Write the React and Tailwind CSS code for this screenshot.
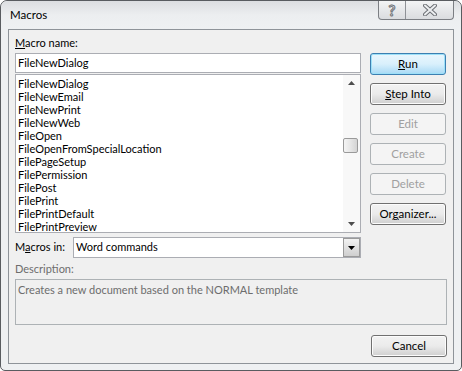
import React from 'react';

const macros = [
  'FileNewDialog',
  'FileNewEmail',
  'FileNewPrint',
  'FileNewWeb',
  'FileOpen',
  'FileOpenFromSpecialLocation',
  'FilePageSetup',
  'FilePermission',
  'FilePost',
  'FilePrint',
  'FilePrintDefault',
  'FilePrintPreview',
];

function Btn({ children, variant = 'normal' }) {
  if (variant === 'default') {
    return (
      <button className="h-[22px] w-[76px] rounded-[3px] border border-[#3c7fb1] bg-gradient-to-b from-[#eaf6fd] via-[#d9f0fc] to-[#a7d9f5] text-[11.5px] text-black shadow-[inset_0_0_0_1px_#9de0f8]">
        {children}
      </button>
    );
  }
  if (variant === 'disabled') {
    return (
      <button className="h-[22px] w-[76px] rounded-[3px] border border-[#adb2b5] bg-[#f4f4f4] text-[11.5px] text-[#a0a0a0]">
        {children}
      </button>
    );
  }
  return (
    <button className="h-[22px] w-[76px] rounded-[3px] border border-[#707070] bg-gradient-to-b from-[#f2f2f2] via-[#ebebeb] to-[#cfcfcf] text-[11.5px] text-black shadow-[inset_0_0_0_1px_#fcfcfc]">
      {children}
    </button>
  );
}

export default function App() {
  return (
    <div className="w-[462px] h-[371px] bg-white font-['Lato',sans-serif] text-[11px] text-black">
      <div className="relative flex h-[371px] flex-col rounded-t-[7px] rounded-b-[5px] border border-[#595c60] bg-[#eef0f2] px-[7px] pb-[6px]">
        {/* title bar */}
        <div className="flex h-[28px] items-center bg-gradient-to-b from-[#dcdee1] via-[#eceef0] to-[#eef0f2] -mx-[7px] px-[9px] rounded-t-[7px]">
          <span className="text-[11.5px] text-black">Macros</span>
        </div>
        <div className="absolute right-[7px] top-0 flex h-[19px] overflow-hidden rounded-b-[4px] border border-t-0 border-[#7b7e83] bg-gradient-to-b from-[#f3f4f5] to-[#dadcdf]">
          <div className="flex w-[27px] items-center justify-center border-r border-[#8e9196] text-[15px] font-bold text-[#e9eaec] [-webkit-text-stroke:1px_#6d7075] leading-none">?</div>
          <div className="flex w-[47px] items-center justify-center">
            <svg width="14" height="12" viewBox="0 0 14 12">
              <path d="M2 1.5 L12 10.5 M12 1.5 L2 10.5" stroke="#6d7075" strokeWidth="4" strokeLinecap="round" />
              <path d="M2 1.5 L12 10.5 M12 1.5 L2 10.5" stroke="#eceef0" strokeWidth="2" strokeLinecap="round" />
            </svg>
          </div>
        </div>

        {/* client area */}
        <div className="flex flex-1 flex-col border border-[#8e9399] bg-[#f0f0f0] px-[6px] pt-[5px]">
          <div className="flex gap-[9px]">
            <div className="flex w-[346px] flex-col">
              <div className="h-[15px] leading-[15px]"><span className="underline">M</span>acro name:</div>
              <div className="mt-[3px] flex h-[20px] items-center border border-[#abadb3] bg-white px-[2px]">FileNewDialog</div>
              <div className="mt-[1px] flex h-[159px] border border-[#abadb3] bg-white">
                <div className="flex-1 pl-[2px] pt-[2px]">
                  {macros.map((m) => (
                    <div key={m} className="h-[13px] leading-[13px]">{m}</div>
                  ))}
                </div>
                <div className="relative flex w-[17px] flex-col items-center justify-between bg-[#f8f8f8] py-[6px]">
                  <svg width="7" height="4" viewBox="0 0 7 4"><path d="M3.5 0 L7 4 L0 4 Z" fill="#4d4d4d" /></svg>
                  <svg width="7" height="4" viewBox="0 0 7 4"><path d="M0 0 L7 0 L3.5 4 Z" fill="#4d4d4d" /></svg>
                  <div className="absolute left-0 top-[63px] h-[15px] w-[15px] rounded-[2px] border border-[#9a9a9a] bg-gradient-to-r from-[#f4f4f4] via-[#e6e6e6] to-[#d4d4d4]" />
                </div>
              </div>
            </div>
            <div className="flex flex-col gap-[8px] pt-[18px]">
              <Btn variant="default"><span className="underline">R</span>un</Btn>
              <Btn><span className="underline">S</span>tep Into</Btn>
              <Btn variant="disabled">Edit</Btn>
              <Btn variant="disabled">Create</Btn>
              <Btn variant="disabled">Delete</Btn>
              <Btn>Or<span className="underline">g</span>anizer...</Btn>
            </div>
          </div>

          <div className="mt-[4px] flex w-[346px] items-center">
            <span className="w-[58px]">M<span className="underline">a</span>cros in:</span>
            <div className="flex h-[21px] flex-1 items-center border border-[#abadb3] bg-white pl-[2px]">
              <span className="flex-1">Word commands</span>
              <div className="flex h-[19px] w-[17px] items-center justify-center border border-[#9a9a9a] bg-gradient-to-b from-[#f2f2f2] to-[#cfcfcf]">
                <svg width="7" height="4" viewBox="0 0 7 4"><path d="M0 0 L7 0 L3.5 4 Z" fill="#000" /></svg>
              </div>
            </div>
          </div>

          <div className="mt-[3px] h-[15px] leading-[15px] text-[#6d6d6d]">Description:</div>
          <div className="mt-[3px] h-[46px] border border-[#adb2b5] bg-[#f0f0f0] px-[2px] pt-[2px] text-[#6d6d6d]">
            Creates a new document based on the NORMAL template
          </div>

          <div className="mt-[10px] flex justify-end pr-[1px]">
            <div className="w-[75px]">
              <Btn>Cancel</Btn>
            </div>
          </div>
        </div>
      </div>
    </div>
  );
}
